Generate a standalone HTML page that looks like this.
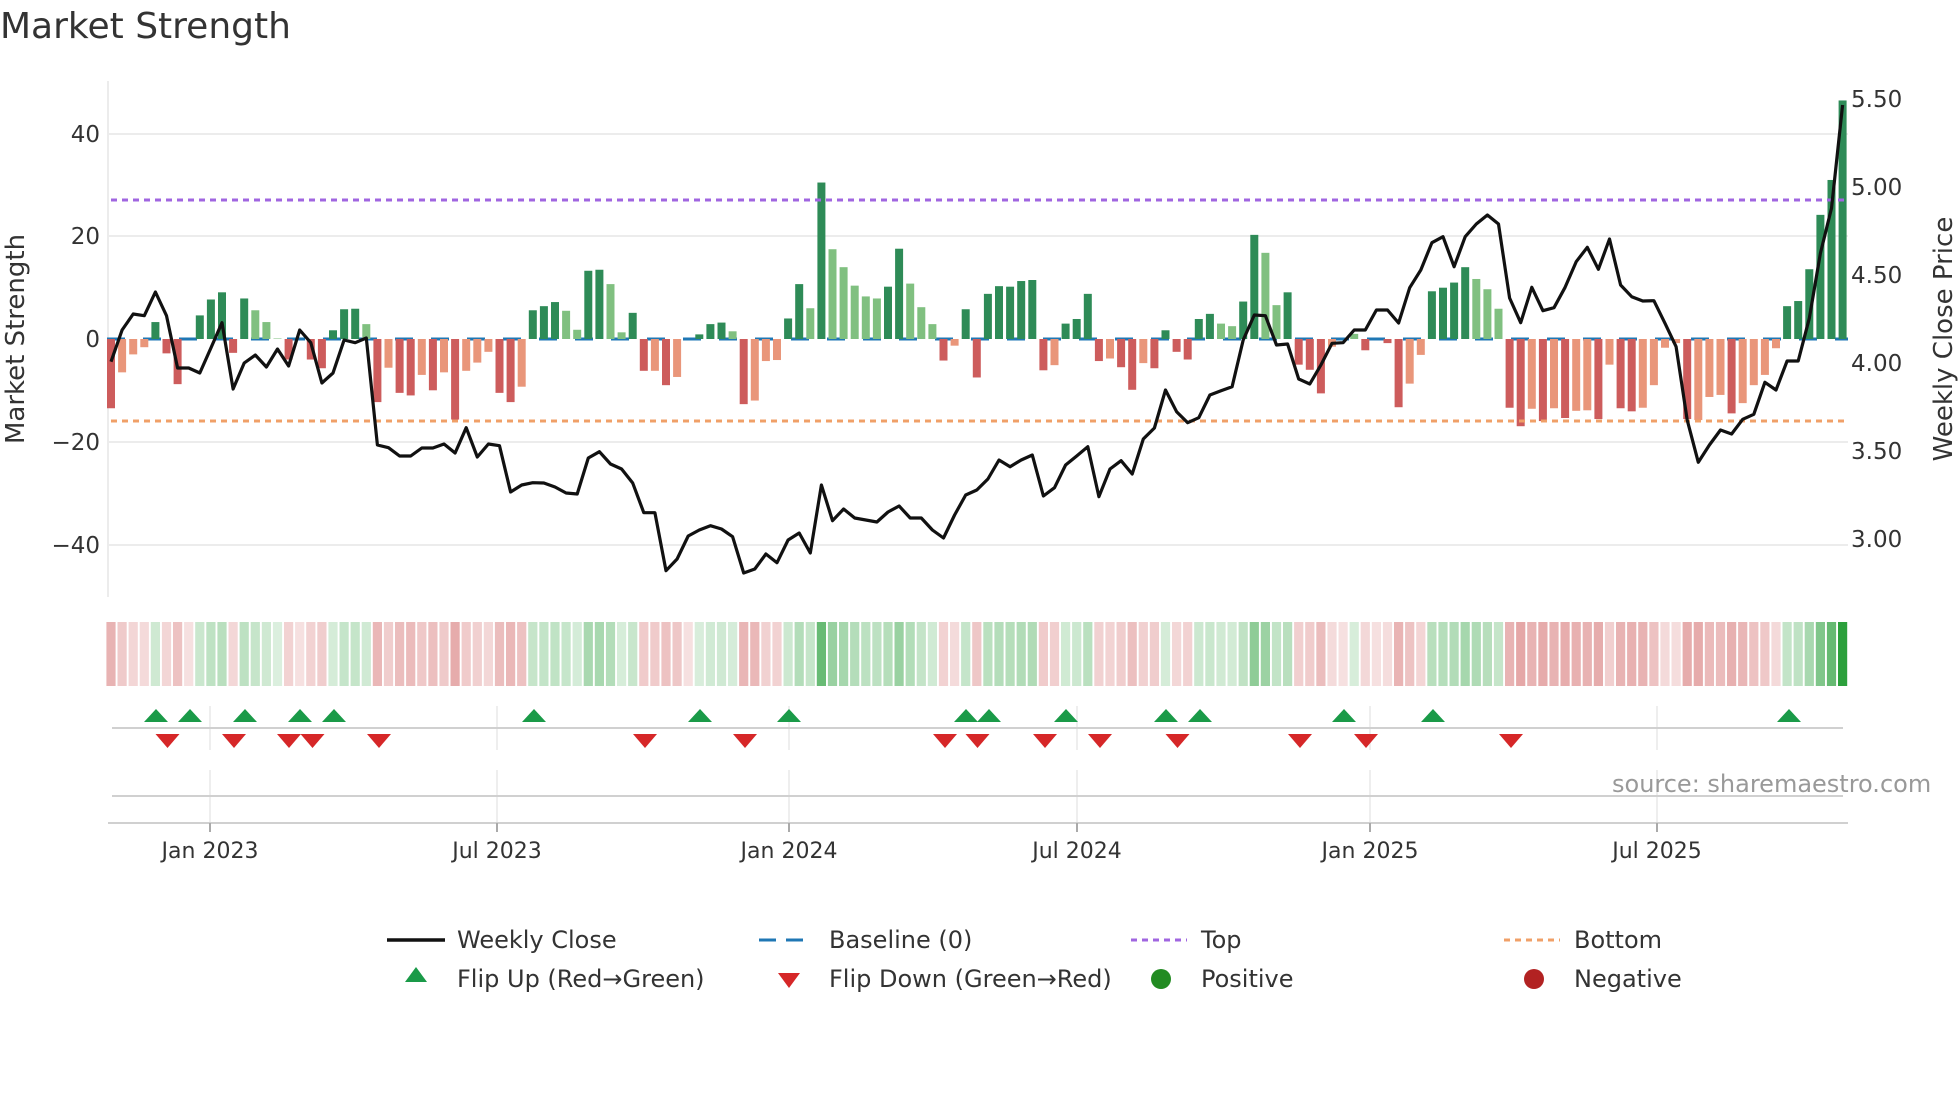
<!DOCTYPE html>
<html><head><meta charset="utf-8"><style>
html,body{margin:0;padding:0;background:#fff;}
svg{display:block;font-family:"DejaVu Sans","Liberation Sans",sans-serif;}
</style></head><body>
<svg id="s" width="1960" height="1102" viewBox="0 0 1960 1102" xmlns="http://www.w3.org/2000/svg">
<rect width="1960" height="1102" fill="#fff"/>
<text x="0" y="38" font-size="36" fill="#333">Market Strength</text>
<g stroke="#ececec" stroke-width="2">
<line x1="108" y1="134" x2="1848" y2="134"/><line x1="108" y1="236" x2="1848" y2="236"/>
<line x1="108" y1="442" x2="1848" y2="442"/><line x1="108" y1="545" x2="1848" y2="545"/>
</g>
<line x1="108" y1="81" x2="108" y2="597" stroke="#ececec" stroke-width="2"/>
<g font-size="23" fill="#333" text-anchor="end">
<text x="100" y="142">40</text><text x="100" y="244">20</text><text x="100" y="347">0</text>
<text x="100" y="450">−20</text><text x="100" y="553">−40</text>
</g>
<g font-size="23" fill="#333">
<text x="1851" y="107">5.50</text><text x="1851" y="195">5.00</text><text x="1851" y="283">4.50</text>
<text x="1851" y="371">4.00</text><text x="1851" y="459">3.50</text><text x="1851" y="547">3.00</text>
</g>
<text transform="translate(24,339) rotate(-90)" font-size="26" fill="#333" text-anchor="middle">Market Strength</text>
<text transform="translate(1952,339) rotate(-90)" font-size="26" fill="#333" text-anchor="middle">Weekly Close Price</text>
<line x1="107" y1="339" x2="1848" y2="339" stroke="#1f77b4" stroke-width="3" stroke-dasharray="18 18"/>
<g id="bars"></g>
<line x1="111" y1="200" x2="1845" y2="200" stroke="#a066e0" stroke-width="3" stroke-dasharray="6 5"/>
<line x1="111" y1="421" x2="1845" y2="421" stroke="#f0a068" stroke-width="3" stroke-dasharray="6 5"/>
<polyline id="price" fill="none" stroke="#111" stroke-width="3.2" stroke-linejoin="round"/>
<g id="heat"></g>
<g stroke="#e8e8e8" stroke-width="1.5">
<line x1="210" y1="706" x2="210" y2="750"/><line x1="497" y1="706" x2="497" y2="750"/><line x1="789" y1="706" x2="789" y2="750"/>
<line x1="1077" y1="706" x2="1077" y2="750"/><line x1="1370" y1="706" x2="1370" y2="750"/><line x1="1657" y1="706" x2="1657" y2="750"/>
<line x1="210" y1="770" x2="210" y2="823"/><line x1="497" y1="770" x2="497" y2="823"/><line x1="789" y1="770" x2="789" y2="823"/>
<line x1="1077" y1="770" x2="1077" y2="823"/><line x1="1370" y1="770" x2="1370" y2="823"/><line x1="1657" y1="770" x2="1657" y2="823"/>
</g>
<line x1="112" y1="728" x2="1843" y2="728" stroke="#d0d0d0" stroke-width="2"/>
<line x1="112" y1="796" x2="1843" y2="796" stroke="#d0d0d0" stroke-width="2"/>
<line x1="108" y1="823" x2="1848" y2="823" stroke="#d0d0d0" stroke-width="2"/>
<g stroke="#aaa" stroke-width="2">
<line x1="210" y1="823" x2="210" y2="832"/><line x1="497" y1="823" x2="497" y2="832"/><line x1="789" y1="823" x2="789" y2="832"/>
<line x1="1077" y1="823" x2="1077" y2="832"/><line x1="1370" y1="823" x2="1370" y2="832"/><line x1="1657" y1="823" x2="1657" y2="832"/>
</g>
<g id="tri"></g>
<g font-size="22" fill="#333" text-anchor="middle">
<text x="210" y="858">Jan 2023</text><text x="497" y="858">Jul 2023</text><text x="789" y="858">Jan 2024</text>
<text x="1077" y="858">Jul 2024</text><text x="1370" y="858">Jan 2025</text><text x="1657" y="858">Jul 2025</text>
</g>
<text x="1612" y="792" font-size="24" fill="#999">source: sharemaestro.com</text>
<g font-size="24" fill="#333">
<line x1="387" y1="940" x2="445" y2="940" stroke="#111" stroke-width="3.5"/>
<text x="457" y="948">Weekly Close</text>
<polygon points="416,967 427,982 405,982" fill="#1a9a48"/>
<text x="457" y="987">Flip Up (Red→Green)</text>
<line x1="759" y1="940" x2="812" y2="940" stroke="#1f77b4" stroke-width="3" stroke-dasharray="17 10"/>
<text x="829" y="948">Baseline (0)</text>
<polygon points="778,973 800,973 789,988" fill="#d62728"/>
<text x="829" y="987">Flip Down (Green→Red)</text>
<line x1="1131" y1="940" x2="1187" y2="940" stroke="#a066e0" stroke-width="3" stroke-dasharray="6 5"/>
<text x="1201" y="948">Top</text>
<circle cx="1161" cy="979" r="10" fill="#228b22"/>
<text x="1201" y="987">Positive</text>
<line x1="1504" y1="940" x2="1560" y2="940" stroke="#f0a068" stroke-width="3" stroke-dasharray="6 5"/>
<text x="1574" y="948">Bottom</text>
<circle cx="1534" cy="979" r="10" fill="#b22222"/>
<text x="1574" y="987">Negative</text>
</g>
</svg>
<script>
var V="-13.5D,-6.5L,-3L,-1.6L,3.3D,-2.8D,-8.8D,0,4.6D,7.7D,9.1D,-2.7D,7.9D,5.6L,3.3L,0.1L,-4D,0,-4D,-5.7D,1.7D,5.8D,5.9D,2.9L,-12.3D,-5.6L,-10.5D,-11D,-7L,-10D,-6.5L,-15.7D,-6.2L,-4.6L,-2.5L,-10.5D,-12.3D,-9.3L,5.6D,6.4D,7.2D,5.5L,1.8L,13.3D,13.5D,10.7L,1.3L,5.1D,-6.2D,-6.2L,-9D,-7.4L,0,"+
"0.9D,2.9D,3.2D,1.5L,-12.7D,-12L,-4.3L,-4.1L,4D,10.7D,6L,30.5D,17.5L,14L,10.4L,8.3L,7.9L,10.2D,17.6D,10.8L,6.2L,2.9L,-4.2D,-1.3L,5.8D,-7.5D,8.8D,10.3D,10.2D,11.3D,11.5D,-6.1D,-5.1L,3D,3.9D,8.8D,-4.3D,-3.8L,-5.5D,-9.9D,-4.7L,-5.7D,1.7D,-2.5D,-4D,3.9D,4.9D,3L,2.5L,7.3D,20.3D,16.8L,6.6L,"+
"9.1D,-5D,-6D,-10.6D,-1.5L,0,1L,-2.2D,0,-0.8D,-13.3D,-8.7L,-3.1L,9.3D,10D,11D,14D,11.7L,9.7L,5.9L,-13.4D,-17D,-13.6L,-16D,-13.5L,-15.4D,-14L,-13.9L,-15.6D,-5L,-13.5D,-14.1D,-13.4L,-9L,-1.7L,-0.8L,-15.6D,-15.8L,-11.3L,-10.9L,-14.5D,-12.5L,-9L,-7L,-1.8L,6.4D,7.4D,13.6D,24.2D,31D,46.5D";
var P=[361.7,330,314,315.7,292,315.7,368,368,373,348,322.7,389,363,355,367,349,366,330,342.7,383,373,340,342.7,338,445,447.7,456,456,448,448,444,453,427.7,457,444,445.7,492,485,482.7,483,487,493,494,458,451.7,464,469,483,512.7,512.7,570.7,559,536,
530,525.7,529,536.7,573,569,554,562.7,540,533,553,485,520.7,509,518,520,522,512,506,518,518,530,538,515,495,490,479,460,466.7,460,455,496,487.7,465,456,446.7,496.7,469,460.7,474,439,428,390,411.7,422.7,417.7,395,390.7,386.7,340,315,315.7,345,
344,379,384,365,343.3,342.7,330,330,310,310,323,287.7,270,242.7,236.7,266.7,236.7,224,215,224,298,322.7,287.3,310.7,307.7,287.3,261.7,247.3,269.3,239,285,296.7,301,300.7,323.3,346.7,420,462.3,445,430,434,419.3,414.3,382.3,390,361,361,318.3,253.3,208.3,105];
var NS="http://www.w3.org/2000/svg";
function el(t,a,p){var e=document.createElementNS(NS,t);for(var k in a)e.setAttribute(k,a[k]);p.appendChild(e);return e;}
var bars=document.getElementById("bars"),heat=document.getElementById("heat"),tri=document.getElementById("tri");
var items=V.split(","),pts=[];
for(var i=0;i<items.length;i++){
 var s=items[i],d=s.slice(-1),v,dark;
 if(d=="D"||d=="L"){v=parseFloat(s.slice(0,-1));dark=d=="D";}else{v=parseFloat(s);dark=true;}
 var x=111+i*11.1,h=Math.abs(v)*5.13;
 if(h>0.5){var c=v>0?(dark?"#2e8b57":"#80c080"):(dark?"#cd5c5c":"#e9967a");
  el("rect",{x:x-4,y:v>0?339-h:339,width:8,height:h,fill:c},bars);}
 var a=Math.min(1,0.17+Math.abs(v)/46.5*0.83),r,g,b;
 if(v>0||(v==0&&i>0&&parseFloat(items[i-1])>0)){r=44;g=160;b=60;}else{r=200;g=70;b=70;a=Math.min(a,0.5);}
 var R=Math.round(255-(255-r)*a),G=Math.round(255-(255-g)*a),B=Math.round(255-(255-b)*a);
 el("rect",{x:x-4.6,y:622,width:9.2,height:64,fill:"rgb("+R+","+G+","+B+")"},heat);
 pts.push(x.toFixed(1)+","+P[i]);
}
document.getElementById("price").setAttribute("points",pts.join(" "));
var up=[156,190,245,300,334,534,700,789,966,989,1066,1166,1200,1344,1433,1789];
var dn=[167.5,234,289,312.5,379,645,745,945,977.5,1045,1100,1177.5,1300,1366,1511];
up.forEach(function(x){el("polygon",{points:(x-12)+",722 "+(x+12)+",722 "+x+",709",fill:"#1a9a48"},tri);});
dn.forEach(function(x){el("polygon",{points:(x-12)+",734 "+(x+12)+",734 "+x+",748",fill:"#d62728"},tri);});
</script>
</body></html>
